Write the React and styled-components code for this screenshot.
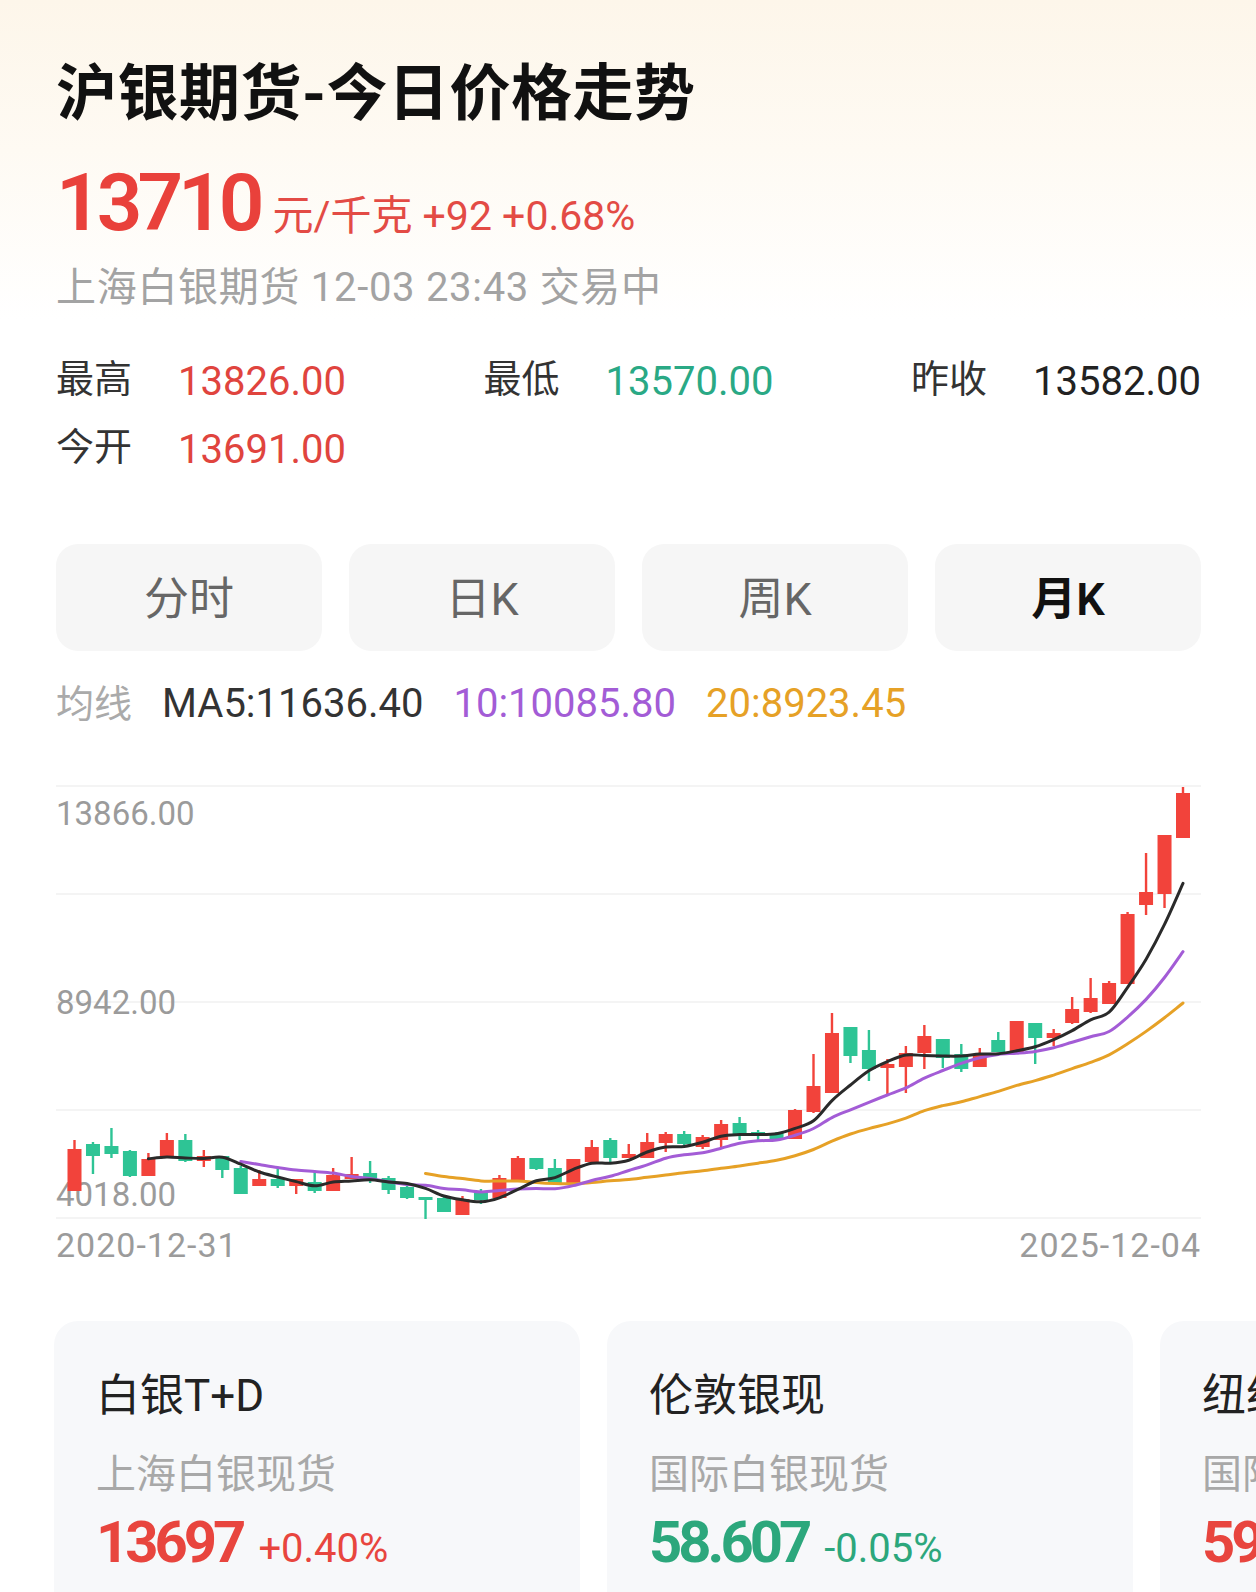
import React from "react";
import styled, { createGlobalStyle } from "styled-components";

const GlobalStyle = createGlobalStyle`
  html, body { margin: 0; padding: 0; background: #ffffff; }
  body { font-family: Roboto, "Noto Sans CJK SC", sans-serif; }
  * { box-sizing: border-box; }
`;

const FONT = `Roboto, "Noto Sans CJK SC", sans-serif`;

const COLORS = {
  red: "#e9413b",
  redSoft: "#e34b45",
  green: "#2aa985",
  dark: "#222222",
  candleRed: "#f2433b",
  candleGreen: "#2ec495",
  ma5: "#2a2a2a",
  ma10: "#a35cd6",
  ma20: "#e6a126",
};

const Page = styled.div`
  width: 1256px;
  height: 1592px;
  overflow: hidden;
  padding: 54px 55px 0 56px;
  font-family: ${FONT};
  background: linear-gradient(180deg, #fdf6ea 0px, #fefaf3 150px, #ffffff 320px);
`;

const Title = styled.h1`
  margin: 0;
  font-size: 61px;
  line-height: 80px;
  font-weight: 700;
  color: #111111;
  letter-spacing: 0.5px;
`;

const PriceRow = styled.div`
  display: flex;
  align-items: baseline;
  gap: 13px;
  margin-top: 28px;
`;

const BigPrice = styled.span`
  font-size: 80px;
  line-height: 82px;
  font-weight: 600;
  letter-spacing: -5px;
  color: ${COLORS.red};
`;

const PriceUnit = styled.span`
  font-size: 41px;
  line-height: 50px;
  color: ${COLORS.redSoft};
  white-space: pre;
`;

const Meta = styled.div`
  margin-top: 18px;
  font-size: 40px;
  line-height: 52px;
  letter-spacing: 0.7px;
  color: #a3a3a3;
  white-space: pre;
`;

const Stats = styled.div`
  margin-top: 33px;
  display: grid;
  grid-template-columns: auto auto auto;
  justify-content: space-between;
`;

const Stat = styled.div`
  display: flex;
  align-items: center;
  gap: 46px;
  height: 68px;
`;

const StatLabel = styled.span`
  font-size: 38px;
  line-height: 1;
  padding-bottom: 5px;
  color: #333333;
`;

const toneColor = (tone) =>
  tone === "up" ? "#e0443e" : tone === "down" ? COLORS.green : COLORS.dark;

const StatValue = styled.span`
  font-size: 40px;
  color: ${(p) => toneColor(p.$tone)};
`;

const Tabs = styled.div`
  margin-top: 61px;
  display: grid;
  grid-template-columns: repeat(4, 1fr);
  gap: 27px;
`;

const Tab = styled.div`
  height: 107px;
  border-radius: 22px;
  background: #f6f6f6;
  display: flex;
  align-items: center;
  justify-content: center;
  padding-bottom: 5px;
  font-size: 45px;
  font-weight: ${(p) => (p.$active ? 600 : 400)};
  color: ${(p) => (p.$active ? "#111111" : "#666666")};
`;

const Legend = styled.div`
  margin-top: 27px;
  display: flex;
  align-items: center;
  gap: 30px;
  line-height: 52px;
`;

const LegendLabel = styled.span`
  font-size: 38px;
  color: #aaaaaa;
`;

const LegendItem = styled.span`
  font-size: 40px;
  color: ${(p) => p.$color};
`;

const ChartSvg = styled.svg`
  display: block;
  margin-top: 46px;
  width: 1145px;
  height: 449px;
  overflow: visible;
`;

const AxisDates = styled.div`
  display: flex;
  justify-content: space-between;
  font-size: 34px;
  line-height: 40px;
  letter-spacing: 1px;
  color: #9b9b9b;
`;

const CardRow = styled.div`
  margin-top: 56px;
  margin-left: -2px;
  margin-right: -55px;
  display: flex;
  gap: 27px;
  overflow: hidden;
`;

const Card = styled.div`
  flex: 0 0 526px;
  height: 300px;
  border-radius: 24px;
  background: #f7f8fa;
  padding: 46px 30px 0 42px;
`;

const CardTitle = styled.div`
  font-size: 44px;
  line-height: 58px;
  color: #222222;
  white-space: nowrap;
`;

const CardSub = styled.div`
  margin-top: 22px;
  font-size: 40px;
  line-height: 56px;
  color: #a8a8a8;
  white-space: nowrap;
`;

const CardPriceRow = styled.div`
  margin-top: 6px;
  display: flex;
  align-items: baseline;
  gap: 16px;
  color: ${(p) => (p.$up ? "#e8453e" : "#2ca77c")};
  white-space: nowrap;
`;

const CardPrice = styled.span`
  font-size: 58px;
  line-height: 66px;
  font-weight: 700;
  letter-spacing: -4px;
`;

const CardChange = styled.span`
  font-size: 40px;
`;

/* candle data: [color, bodyTop, bodyBottom, wickTop, wickBottom] in page px */
const RAW = [
  ["r", 1148, 1190, 1139, 1190],
  ["g", 1143, 1155, 1141, 1173],
  ["g", 1145, 1153, 1127, 1157],
  ["g", 1150, 1175, 1149, 1176],
  ["r", 1158, 1175, 1152, 1175],
  ["r", 1139, 1157, 1132, 1157],
  ["g", 1139, 1160, 1133, 1161],
  ["r", 1155, 1160, 1149, 1166],
  ["g", 1155, 1169, 1155, 1177],
  ["g", 1167, 1193, 1165, 1193],
  ["r", 1178, 1185, 1169, 1185],
  ["g", 1178, 1185, 1167, 1187],
  ["r", 1178, 1185, 1178, 1193],
  ["g", 1181, 1190, 1171, 1192],
  ["r", 1174, 1190, 1167, 1190],
  ["r", 1173, 1178, 1156, 1178],
  ["g", 1172, 1179, 1160, 1182],
  ["g", 1177, 1189, 1175, 1193],
  ["g", 1186, 1197, 1184, 1198],
  ["g", 1196, 1199, 1196, 1218],
  ["g", 1197, 1211, 1196, 1211],
  ["r", 1198, 1214, 1195, 1214],
  ["g", 1192, 1199, 1188, 1203],
  ["r", 1177, 1197, 1174, 1197],
  ["r", 1157, 1179, 1155, 1179],
  ["g", 1157, 1168, 1157, 1169],
  ["g", 1167, 1182, 1158, 1183],
  ["r", 1158, 1182, 1158, 1182],
  ["r", 1146, 1161, 1139, 1161],
  ["g", 1139, 1157, 1137, 1163],
  ["r", 1153, 1157, 1143, 1157],
  ["r", 1141, 1157, 1132, 1157],
  ["r", 1133, 1142, 1131, 1151],
  ["g", 1133, 1143, 1130, 1144],
  ["r", 1136, 1146, 1134, 1148],
  ["r", 1123, 1139, 1119, 1146],
  ["g", 1122, 1133, 1116, 1139],
  ["g", 1131, 1133, 1129, 1141],
  ["g", 1132, 1139, 1131, 1140],
  ["r", 1109, 1138, 1108, 1138],
  ["r", 1085, 1111, 1053, 1112],
  ["r", 1032, 1092, 1012, 1092],
  ["g", 1026, 1055, 1026, 1062],
  ["g", 1049, 1068, 1029, 1080],
  ["r", 1063, 1067, 1058, 1093],
  ["r", 1052, 1066, 1045, 1092],
  ["r", 1035, 1052, 1024, 1068],
  ["g", 1038, 1057, 1038, 1067],
  ["g", 1053, 1068, 1043, 1071],
  ["r", 1053, 1066, 1047, 1066],
  ["g", 1039, 1051, 1031, 1051],
  ["r", 1020, 1052, 1020, 1052],
  ["g", 1022, 1037, 1022, 1063],
  ["r", 1032, 1037, 1028, 1045],
  ["r", 1008, 1022, 996, 1023],
  ["r", 997, 1011, 977, 1012],
  ["r", 982, 1003, 980, 1003],
  ["r", 913, 983, 911, 983],
  ["r", 891, 904, 852, 914],
  ["r", 834, 893, 834, 907],
  ["r", 792, 837, 786, 837],
];

const TOP = 775;
const STEP = 18.475;
const X0 = 18.5;
const candles = RAW.map(([c, bt, bb, wt, wb], i) => {
  const up = c === "r";
  return {
    up,
    x: X0 + i * STEP,
    top: bt - TOP,
    bottom: bb - TOP,
    high: wt - TOP,
    low: wb - TOP,
    close: up ? bt - TOP : bb - TOP,
  };
});

function movingAverage(n) {
  const pts = [];
  for (let i = n - 1; i < candles.length; i++) {
    let s = 0;
    for (let k = i - n + 1; k <= i; k++) s += candles[k].close;
    pts.push([candles[i].x, s / n]);
  }
  return pts;
}

function smoothPath(pts) {
  let d = `M${pts[0][0].toFixed(1)},${pts[0][1].toFixed(1)}`;
  for (let i = 0; i < pts.length - 1; i++) {
    const p0 = pts[i - 1] || pts[i];
    const p1 = pts[i];
    const p2 = pts[i + 1];
    const p3 = pts[i + 2] || p2;
    const c1x = p1[0] + (p2[0] - p0[0]) / 6;
    const c1y = p1[1] + (p2[1] - p0[1]) / 6;
    const c2x = p2[0] - (p3[0] - p1[0]) / 6;
    const c2y = p2[1] - (p3[1] - p1[1]) / 6;
    d += ` C${c1x.toFixed(1)},${c1y.toFixed(1)} ${c2x.toFixed(1)},${c2y.toFixed(1)} ${p2[0].toFixed(1)},${p2[1].toFixed(1)}`;
  }
  return d;
}

const GRID = [10, 118, 226, 334, 442];

function KChart() {
  const ma5 = smoothPath(movingAverage(5));
  const ma10 = smoothPath(movingAverage(10));
  const ma20 = smoothPath(movingAverage(20));
  return (
    <ChartSvg viewBox="0 0 1145 449">
      {GRID.map((y) => (
        <line key={y} x1="0" x2="1145" y1={y} y2={y} stroke="#f1f1f1" strokeWidth="1.5" />
      ))}
      <g fontFamily="Roboto, sans-serif" fontSize="33" fill="#9b9b9b">
        <text x="0" y="49">13866.00</text>
        <text x="0" y="238">8942.00</text>
        <text x="0" y="430">4018.00</text>
      </g>
      {candles.map((c, i) => {
        const color = c.up ? COLORS.candleRed : COLORS.candleGreen;
        const h = Math.max(c.bottom - c.top, 2.5);
        return (
          <g key={i} fill={color}>
            <rect x={c.x - 1.2} y={c.high} width="2.4" height={Math.max(c.low - c.high, 1)} />
            <rect x={c.x - 7} y={c.top} width="14" height={h} />
          </g>
        );
      })}
      <path d={ma20} fill="none" stroke={COLORS.ma20} strokeWidth="3" strokeLinejoin="round" strokeLinecap="round" />
      <path d={ma10} fill="none" stroke={COLORS.ma10} strokeWidth="3" strokeLinejoin="round" strokeLinecap="round" />
      <path d={ma5} fill="none" stroke={COLORS.ma5} strokeWidth="3" strokeLinejoin="round" strokeLinecap="round" />
    </ChartSvg>
  );
}

const stats = [
  { label: "最高", value: "13826.00", tone: "up" },
  { label: "最低", value: "13570.00", tone: "down" },
  { label: "昨收", value: "13582.00", tone: "flat" },
  { label: "今开", value: "13691.00", tone: "up" },
];

const tabs = [
  { label: "分时" },
  { label: "日K" },
  { label: "周K" },
  { label: "月K", active: true },
];

const cards = [
  { title: "白银T+D", sub: "上海白银现货", price: "13697", change: "+0.40%", up: true },
  { title: "伦敦银现", sub: "国际白银现货", price: "58.607", change: "-0.05%", up: false },
  { title: "纽约期银", sub: "国际白银期货", price: "59.180", change: "+0.35%", up: true },
];

export default function App() {
  return (
    <>
      <GlobalStyle />
      <Page>
        <Title>沪银期货-今日价格走势</Title>
        <PriceRow>
          <BigPrice>13710</BigPrice>
          <PriceUnit>元/千克 +92 +0.68%</PriceUnit>
        </PriceRow>
        <Meta>上海白银期货 12-03 23:43 交易中</Meta>

        <Stats>
          {stats.map((s) => (
            <Stat key={s.label}>
              <StatLabel>{s.label}</StatLabel>
              <StatValue $tone={s.tone}>{s.value}</StatValue>
            </Stat>
          ))}
        </Stats>

        <Tabs>
          {tabs.map((t) => (
            <Tab key={t.label} $active={t.active}>
              {t.label}
            </Tab>
          ))}
        </Tabs>

        <Legend>
          <LegendLabel>均线</LegendLabel>
          <LegendItem $color="#333333">MA5:11636.40</LegendItem>
          <LegendItem $color={COLORS.ma10}>10:10085.80</LegendItem>
          <LegendItem $color={COLORS.ma20}>20:8923.45</LegendItem>
        </Legend>

        <KChart />

        <AxisDates>
          <span>2020-12-31</span>
          <span>2025-12-04</span>
        </AxisDates>

        <CardRow>
          {cards.map((c) => (
            <Card key={c.title}>
              <CardTitle>{c.title}</CardTitle>
              <CardSub>{c.sub}</CardSub>
              <CardPriceRow $up={c.up}>
                <CardPrice>{c.price}</CardPrice>
                <CardChange>{c.change}</CardChange>
              </CardPriceRow>
            </Card>
          ))}
        </CardRow>
      </Page>
    </>
  );
}
